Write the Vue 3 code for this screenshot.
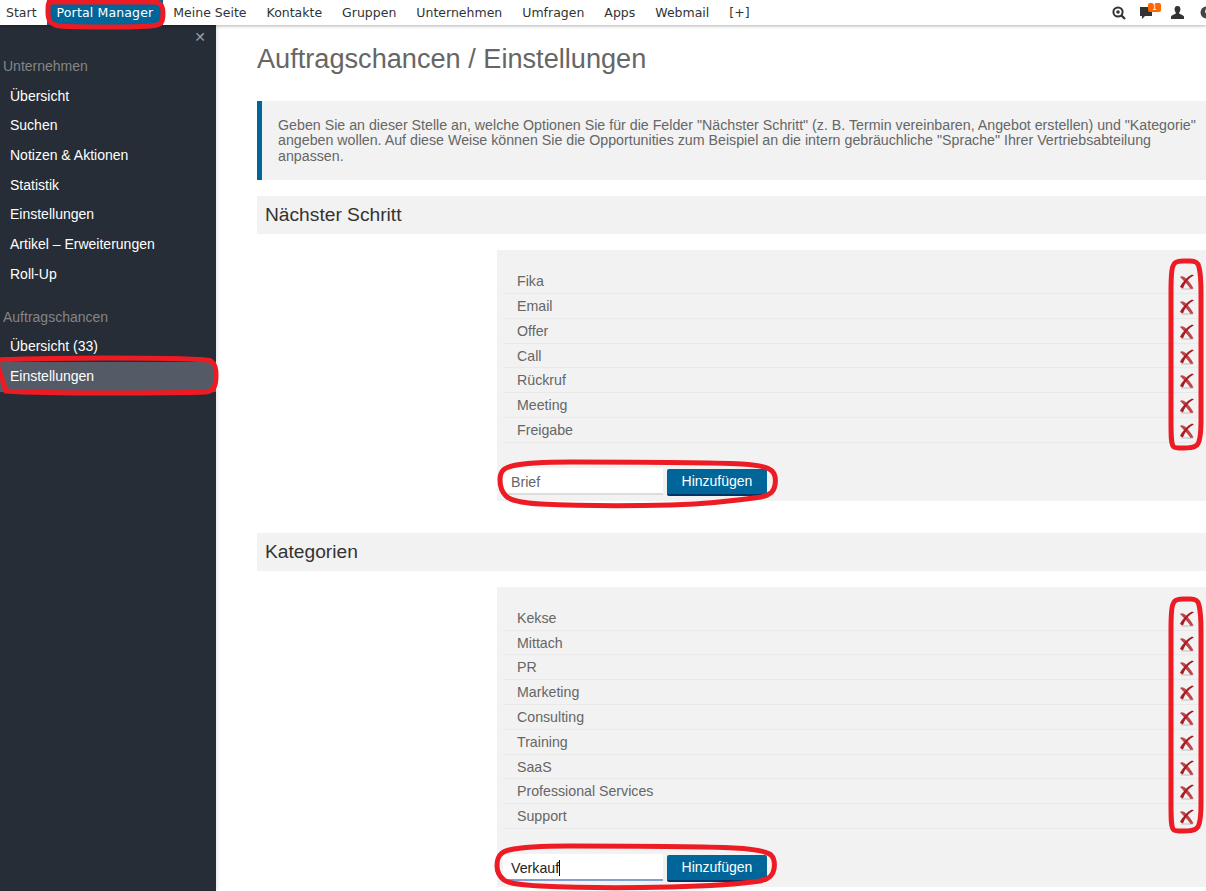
<script setup>
const nav = ['Start', 'Portal Manager', 'Meine Seite', 'Kontakte', 'Gruppen', 'Unternehmen', 'Umfragen', 'Apps', 'Webmail', '[+]']
const groups = [
  { title: 'Unternehmen', items: ['Übersicht', 'Suchen', 'Notizen & Aktionen', 'Statistik', 'Einstellungen', 'Artikel – Erweiterungen', 'Roll-Up'] },
  { title: 'Auftragschancen', items: ['Übersicht (33)', 'Einstellungen'] }
]
const sections = [
  { title: 'Nächster Schritt', rows: ['Fika', 'Email', 'Offer', 'Call', 'Rückruf', 'Meeting', 'Freigabe'], value: 'Brief', focused: false },
  { title: 'Kategorien', rows: ['Kekse', 'Mittach', 'PR', 'Marketing', 'Consulting', 'Training', 'SaaS', 'Professional Services', 'Support'], value: 'Verkauf', focused: true }
]
</script>

<template>
  <div class="page">
    <header class="topbar">
      <nav class="nav">
        <a v-for="n in nav" :key="n" class="nav-item" :class="{ active: n === 'Portal Manager' }">{{ n }}</a>
      </nav>
      <div class="tools">
        <svg class="tool" width="14" height="14" viewBox="0 0 14 14">
          <circle cx="6" cy="6" r="4.6" fill="none" stroke="#333" stroke-width="2" />
          <circle cx="6" cy="6" r="1.8" fill="#333" />
          <path d="M9.4 9.4 13 13" stroke="#333" stroke-width="2.2" />
        </svg>
        <span class="chat">
          <svg width="13" height="14" viewBox="0 0 13 14"><path d="M0 1h12v9H5l-3 3v-3H0z" fill="#333" /></svg>
          <b class="badge">1</b>
        </span>
        <svg class="tool" width="13" height="13" viewBox="0 0 13 13">
          <path d="M6.5 0C8.6 0 9.6 1.600 9.400 3.600 9.200 5.400 8.500 6.400 8 7c0 1 3.500 1.600 5 3.500V13H0v-2.500C1.500 8.600 5 8 5 7 4.500 6.400 3.800 5.400 3.600 3.600 3.400 1.600 4.400 0 6.500 0z" fill="#333" />
        </svg>
        <svg class="globe" width="13" height="13" viewBox="0 0 13 13">
          <circle cx="6.500" cy="6.500" r="6" fill="#444" />
          <path d="M6 2h4l1 3-3 1-1 3-2-3z" fill="#fff" />
        </svg>
      </div>
    </header>

    <div class="body">
      <aside class="sidebar">
        <div class="close">✕</div>
        <section v-for="g in groups" :key="g.title" class="side-group">
          <h4 class="side-title">{{ g.title }}</h4>
          <a v-for="it in g.items" :key="it" class="side-item"
             :class="{ current: g.title === 'Auftragschancen' && it === 'Einstellungen' }">{{ it }}</a>
        </section>
      </aside>

      <main class="main">
        <h1 class="title">Auftragschancen / Einstellungen</h1>
        <p class="info">Geben Sie an dieser Stelle an, welche Optionen Sie für die Felder "Nächster Schritt" (z. B. Termin vereinbaren, Angebot erstellen) und "Kategorie" angeben wollen. Auf diese Weise können Sie die Opportunities zum Beispiel an die intern gebräuchliche "Sprache" Ihrer Vertriebsabteilung anpassen.</p>

        <section v-for="s in sections" :key="s.title" class="section">
          <h2 class="section-title">{{ s.title }}</h2>
          <div class="panel">
            <ul class="rows">
              <li v-for="r in s.rows" :key="r" class="row">
                <span>{{ r }}</span>
                <svg class="del" width="16" height="16" viewBox="0 0 16 16">
                  <path d="M2 15h12" stroke="#cfcfcf" stroke-width="1.500" />
                  <path d="M1 3c2-1.500 4-.5 7 2.500 3 3 5 6 6.500 9l-3 .5C10 12 5 7 1 3z" fill="#c0444a" />
                  <path d="M15 1.500C11 3 6.500 7.500 4 14.500L1 13C3.500 8 8.500 2.500 13 .5z" fill="#a81c22" />
                </svg>
              </li>
            </ul>
            <form class="add" @submit.prevent>
              <div class="field" :class="{ focused: s.focused }">{{ s.value }}<i v-if="s.focused" class="caret"></i></div>
              <button class="btn" type="button">Hinzufügen</button>
            </form>
          </div>
        </section>
      </main>
    </div>

    <svg class="marks" width="1206" height="891" viewBox="0 0 1206 891" fill="none" stroke="#ed1c24" stroke-width="5">
      <path d="M50 2h104c7 0 9 4 9 11s-1 11-6 12c-5 1-18 2-45 2-25 0-42 0-52-1-9-1-12-5-12-13 0-7 0-11 2-11z" />
      <path d="M-4 360c25-1 60-2 110-2 50 0 88 1 100 2 7 0 10 4 10 15s-2 16-10 17c-25 1-60 1-100 1-50 0-85-1-100-2z" />
      <path d="M1171 292c0-12 0-22 2-26 1-4 4-5 10-5h7c5 0 8 1 9 6 1 4 2 14 2 26v127c0 14-1 22-4 25-3 3-8 3-14 3-5 0-8 0-9-1-3-2-3-10-3-27z" />
      <path d="M1171 630c0-12 0-22 2-26 1-4 4-5 10-5h7c5 0 8 1 9 6 1 4 2 14 2 26v172c0 14-1 22-4 25-3 3-8 3-14 3-5 0-8 0-9-1-3-2-3-10-3-27z" />
      <path d="M500 480c0-8 3-12 12-14 8-2 22-4 60-4 60 0 130 0 170 2 18 1 26 3 30 7 3 3 4 8 3 14-1 6-4 10-14 12-20 3-60 7-90 8-40 1-90 1-130-1-18-1-30-3-35-8-4-4-6-9-6-16z" />
      <path d="M497 866c0-9 3-14 12-16 9-2 22-4 60-4 60 0 130 0 165 2 22 1 32 3 37 7 3 3 4 8 3 14-1 6-4 10-14 12-20 3-50 5-90 6-40 1-90 1-130-1-18-1-30-2-36-6-5-4-7-8-7-14z" />
    </svg>
  </div>
</template>

<style>
html, body { margin: 0; overflow: hidden; }
</style>

<style scoped>
.page {
  position: relative;
  width: 1206px;
  height: 891px;
  overflow: hidden;
  background: #fff;
  font-family: "Liberation Sans", Arial, sans-serif;
  font-size: 14px;
  color: #666;
}
.topbar {
  position: relative;
  z-index: 2;
  display: flex;
  justify-content: space-between;
  height: 25px;
  background: #fff;
  box-shadow: 0 1px 3px rgba(0, 0, 0, .3);
}
.nav { display: flex; padding-left: 6px; }
.nav-item {
  padding: 0 10px;
  line-height: 25px;
  font-family: "DejaVu Sans", Verdana, sans-serif;
  font-size: 12.500px;
  color: #333;
  white-space: nowrap;
}
.nav-item:first-child { padding: 0 10px 0 0; }
.nav-item.active { background: #006699; color: #fff; letter-spacing: .15px; }
.tools {
  display: flex;
  align-items: center;
  width: 93px;
  flex: none;
  position: relative;
  left: -1px;
}
.tool { display: block; flex: none; }
.chat { position: relative; display: block; width: 13px; height: 14px; margin: 1px 18px 0 14px; }
.chat svg { display: block; }
.badge {
  position: absolute;
  left: 8px;
  top: -3px;
  width: 13px;
  height: 9px;
  border-radius: 2px;
  background: #ff6600;
  color: #fff;
  font: 8px/9px "DejaVu Sans", sans-serif;
  text-align: center;
}
.globe { position: absolute; right: -8px; top: 6px; }

.body { display: flex; height: 866px; }
.sidebar {
  flex: none;
  box-sizing: border-box;
  position: relative;
  width: 216px;
  padding-top: 29px;
  background: #262d36;
  box-shadow: 1px 0 4px rgba(0, 0, 0, .12);
}
.close {
  position: absolute;
  right: 10px;
  top: 4px;
  color: #9a9ea5;
  font: bold 14px/16px "DejaVu Sans", sans-serif;
}
.side-group { margin-bottom: 15.500px; }
.side-title {
  margin: 0;
  padding-left: 3px;
  height: 27.500px;
  line-height: 24px;
  font-size: 14px;
  font-weight: normal;
  color: #858585;
}
.side-item {
  display: block;
  height: 29.700px;
  line-height: 29.700px;
  padding-left: 10px;
  color: #fff;
  font-size: 14px;
}
.side-item.current { background: #555b66; }

.main {
  flex: none;
  width: 1000px;
  margin-left: 41px;
  font-size: 14.200px;
}
.title {
  margin: 0;
  padding-top: 18px;
  height: 58px;
  line-height: 32px;
  font-size: 27.150px;
  font-weight: normal;
  color: #666;
}
.info {
  margin: 0 0 16px;
  box-sizing: border-box;
  height: 79px;
  width: 949px;
  padding: 17px 0 0 16px;
  border-left: 5px solid #006699;
  background: #f2f2f2;
  line-height: 15.400px;
  font-size: 14.230px;
}
.section { margin-bottom: 32px; }
.section-title {
  margin: 0 0 16px;
  height: 38px;
  padding-left: 8px;
  line-height: 38px;
  font-size: 19.200px;
  font-weight: normal;
  color: #333;
  background: #f2f2f2;
}
.panel {
  margin-left: 240px;
  padding: 19.300px 0 5px 6px;
  background: #f2f2f2;
}
.rows { margin: 0; padding: 0; list-style: none; width: 698px; }
.row {
  display: flex;
  justify-content: space-between;
  align-items: center;
  box-sizing: border-box;
  height: 24.800px;
  padding: 0 6px 0 14px;
  border-bottom: 1px solid #e9e9e9;
}
.del { display: block; flex: none; margin-top: 2px; }
.add { display: flex; margin-top: 24.700px; }
.field {
  box-sizing: border-box;
  width: 160px;
  height: 27px;
  padding-left: 8px;
  background: #fff;
  border-bottom: 2px solid #dcdcdc;
  line-height: 28px;
  color: #666;
}
.field.focused { border-bottom-color: #7f9fd3; color: #222; }
.caret {
  display: inline-block;
  width: 1px;
  height: 16px;
  background: #000;
  vertical-align: -3px;
}
.btn {
  box-sizing: border-box;
  width: 100px;
  height: 27px;
  margin: 1px 0 0 4px;
  padding: 0;
  border: 0;
  border-bottom: 2px solid #003366;
  border-radius: 2px;
  background: #006699;
  color: #fff;
  font: 14px "Liberation Sans", Arial, sans-serif;
}

.marks {
  position: absolute;
  z-index: 3;
  left: 0;
  top: 0;
  pointer-events: none;
}
</style>
